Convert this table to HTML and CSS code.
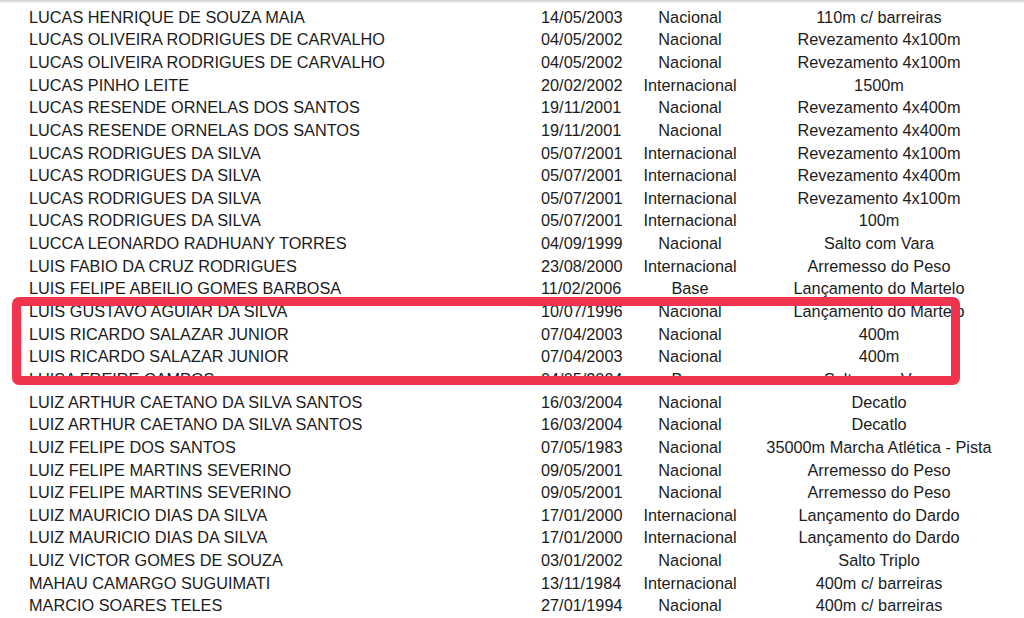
FILE: index.html
```html
<!DOCTYPE html>
<html lang="pt-BR">
<head>
<meta charset="utf-8">
<title>Lista de atletas</title>
<link rel="stylesheet" href="styles.css">
</head>
<body>
<div class="page">
  <div class="top-shade"></div>
  <div class="list">
    <div class="row"><span class="name">LUCAS HENRIQUE DE SOUZA MAIA</span><span class="date">14/05/2003</span><span class="cat">Nacional</span><span class="event">110m c/ barreiras</span></div>
    <div class="row"><span class="name">LUCAS OLIVEIRA RODRIGUES DE CARVALHO</span><span class="date">04/05/2002</span><span class="cat">Nacional</span><span class="event">Revezamento 4x100m</span></div>
    <div class="row"><span class="name">LUCAS OLIVEIRA RODRIGUES DE CARVALHO</span><span class="date">04/05/2002</span><span class="cat">Nacional</span><span class="event">Revezamento 4x100m</span></div>
    <div class="row"><span class="name">LUCAS PINHO LEITE</span><span class="date">20/02/2002</span><span class="cat">Internacional</span><span class="event">1500m</span></div>
    <div class="row"><span class="name">LUCAS RESENDE ORNELAS DOS SANTOS</span><span class="date">19/11/2001</span><span class="cat">Nacional</span><span class="event">Revezamento 4x400m</span></div>
    <div class="row"><span class="name">LUCAS RESENDE ORNELAS DOS SANTOS</span><span class="date">19/11/2001</span><span class="cat">Nacional</span><span class="event">Revezamento 4x400m</span></div>
    <div class="row"><span class="name">LUCAS RODRIGUES DA SILVA</span><span class="date">05/07/2001</span><span class="cat">Internacional</span><span class="event">Revezamento 4x100m</span></div>
    <div class="row"><span class="name">LUCAS RODRIGUES DA SILVA</span><span class="date">05/07/2001</span><span class="cat">Internacional</span><span class="event">Revezamento 4x400m</span></div>
    <div class="row"><span class="name">LUCAS RODRIGUES DA SILVA</span><span class="date">05/07/2001</span><span class="cat">Internacional</span><span class="event">Revezamento 4x100m</span></div>
    <div class="row"><span class="name">LUCAS RODRIGUES DA SILVA</span><span class="date">05/07/2001</span><span class="cat">Internacional</span><span class="event">100m</span></div>
    <div class="row"><span class="name">LUCCA LEONARDO RADHUANY TORRES</span><span class="date">04/09/1999</span><span class="cat">Nacional</span><span class="event">Salto com Vara</span></div>
    <div class="row"><span class="name">LUIS FABIO DA CRUZ RODRIGUES</span><span class="date">23/08/2000</span><span class="cat">Internacional</span><span class="event">Arremesso do Peso</span></div>
    <div class="row"><span class="name">LUIS FELIPE ABEILIO GOMES BARBOSA</span><span class="date">11/02/2006</span><span class="cat">Base</span><span class="event">Lançamento do Martelo</span></div>
    <div class="row"><span class="name">LUIS GUSTAVO AGUIAR DA SILVA</span><span class="date">10/07/1996</span><span class="cat">Nacional</span><span class="event">Lançamento do Martelo</span></div>
    <div class="row"><span class="name">LUIS RICARDO SALAZAR JUNIOR</span><span class="date">07/04/2003</span><span class="cat">Nacional</span><span class="event">400m</span></div>
    <div class="row"><span class="name">LUIS RICARDO SALAZAR JUNIOR</span><span class="date">07/04/2003</span><span class="cat">Nacional</span><span class="event">400m</span></div>
    <div class="row"><span class="name">LUISA FREIRE CAMPOS</span><span class="date">04/05/2004</span><span class="cat">Base</span><span class="event">Salto com Vara</span></div>
    <div class="row"><span class="name">LUIZ ARTHUR CAETANO DA SILVA SANTOS</span><span class="date">16/03/2004</span><span class="cat">Nacional</span><span class="event">Decatlo</span></div>
    <div class="row"><span class="name">LUIZ ARTHUR CAETANO DA SILVA SANTOS</span><span class="date">16/03/2004</span><span class="cat">Nacional</span><span class="event">Decatlo</span></div>
    <div class="row"><span class="name">LUIZ FELIPE DOS SANTOS</span><span class="date">07/05/1983</span><span class="cat">Nacional</span><span class="event">35000m Marcha Atlética - Pista</span></div>
    <div class="row"><span class="name">LUIZ FELIPE MARTINS SEVERINO</span><span class="date">09/05/2001</span><span class="cat">Nacional</span><span class="event">Arremesso do Peso</span></div>
    <div class="row"><span class="name">LUIZ FELIPE MARTINS SEVERINO</span><span class="date">09/05/2001</span><span class="cat">Nacional</span><span class="event">Arremesso do Peso</span></div>
    <div class="row"><span class="name">LUIZ MAURICIO DIAS DA SILVA</span><span class="date">17/01/2000</span><span class="cat">Internacional</span><span class="event">Lançamento do Dardo</span></div>
    <div class="row"><span class="name">LUIZ MAURICIO DIAS DA SILVA</span><span class="date">17/01/2000</span><span class="cat">Internacional</span><span class="event">Lançamento do Dardo</span></div>
    <div class="row"><span class="name">LUIZ VICTOR GOMES DE SOUZA</span><span class="date">03/01/2002</span><span class="cat">Nacional</span><span class="event">Salto Triplo</span></div>
    <div class="row"><span class="name">MAHAU CAMARGO SUGUIMATI</span><span class="date">13/11/1984</span><span class="cat">Internacional</span><span class="event">400m c/ barreiras</span></div>
    <div class="row"><span class="name">MARCIO SOARES TELES</span><span class="date">27/01/1994</span><span class="cat">Nacional</span><span class="event">400m c/ barreiras</span></div>
  </div>
  <div class="highlight"></div>
</div>
</body>
</html>
```

FILE: styles.css
```css
html, body {
  margin: 0;
  padding: 0;
  background: #ffffff;
}

.page {
  position: relative;
  width: 1024px;
  height: 618px;
  overflow: hidden;
  background: #ffffff;
  font-family: "Liberation Sans", Arial, sans-serif;
  font-size: 16.3px;
  color: #1c1c1c;
}

.top-shade {
  height: 3px;
  background: linear-gradient(#cdcdcd, #f4f4f4);
}

.list {
  padding: 2.7px 0 0 29px;
}

.row {
  display: grid;
  grid-template-columns: 512px 80px 138px 240px;
  line-height: 22.65px;
  height: 22.65px;
  white-space: nowrap;
}

.name,
.date {
  text-align: left;
}

.cat,
.event {
  text-align: center;
}

.highlight {
  position: absolute;
  left: 12px;
  top: 297px;
  width: 930px;
  height: 70px;
  border: 9px solid #f0344e;
  border-radius: 7px;
}
```
